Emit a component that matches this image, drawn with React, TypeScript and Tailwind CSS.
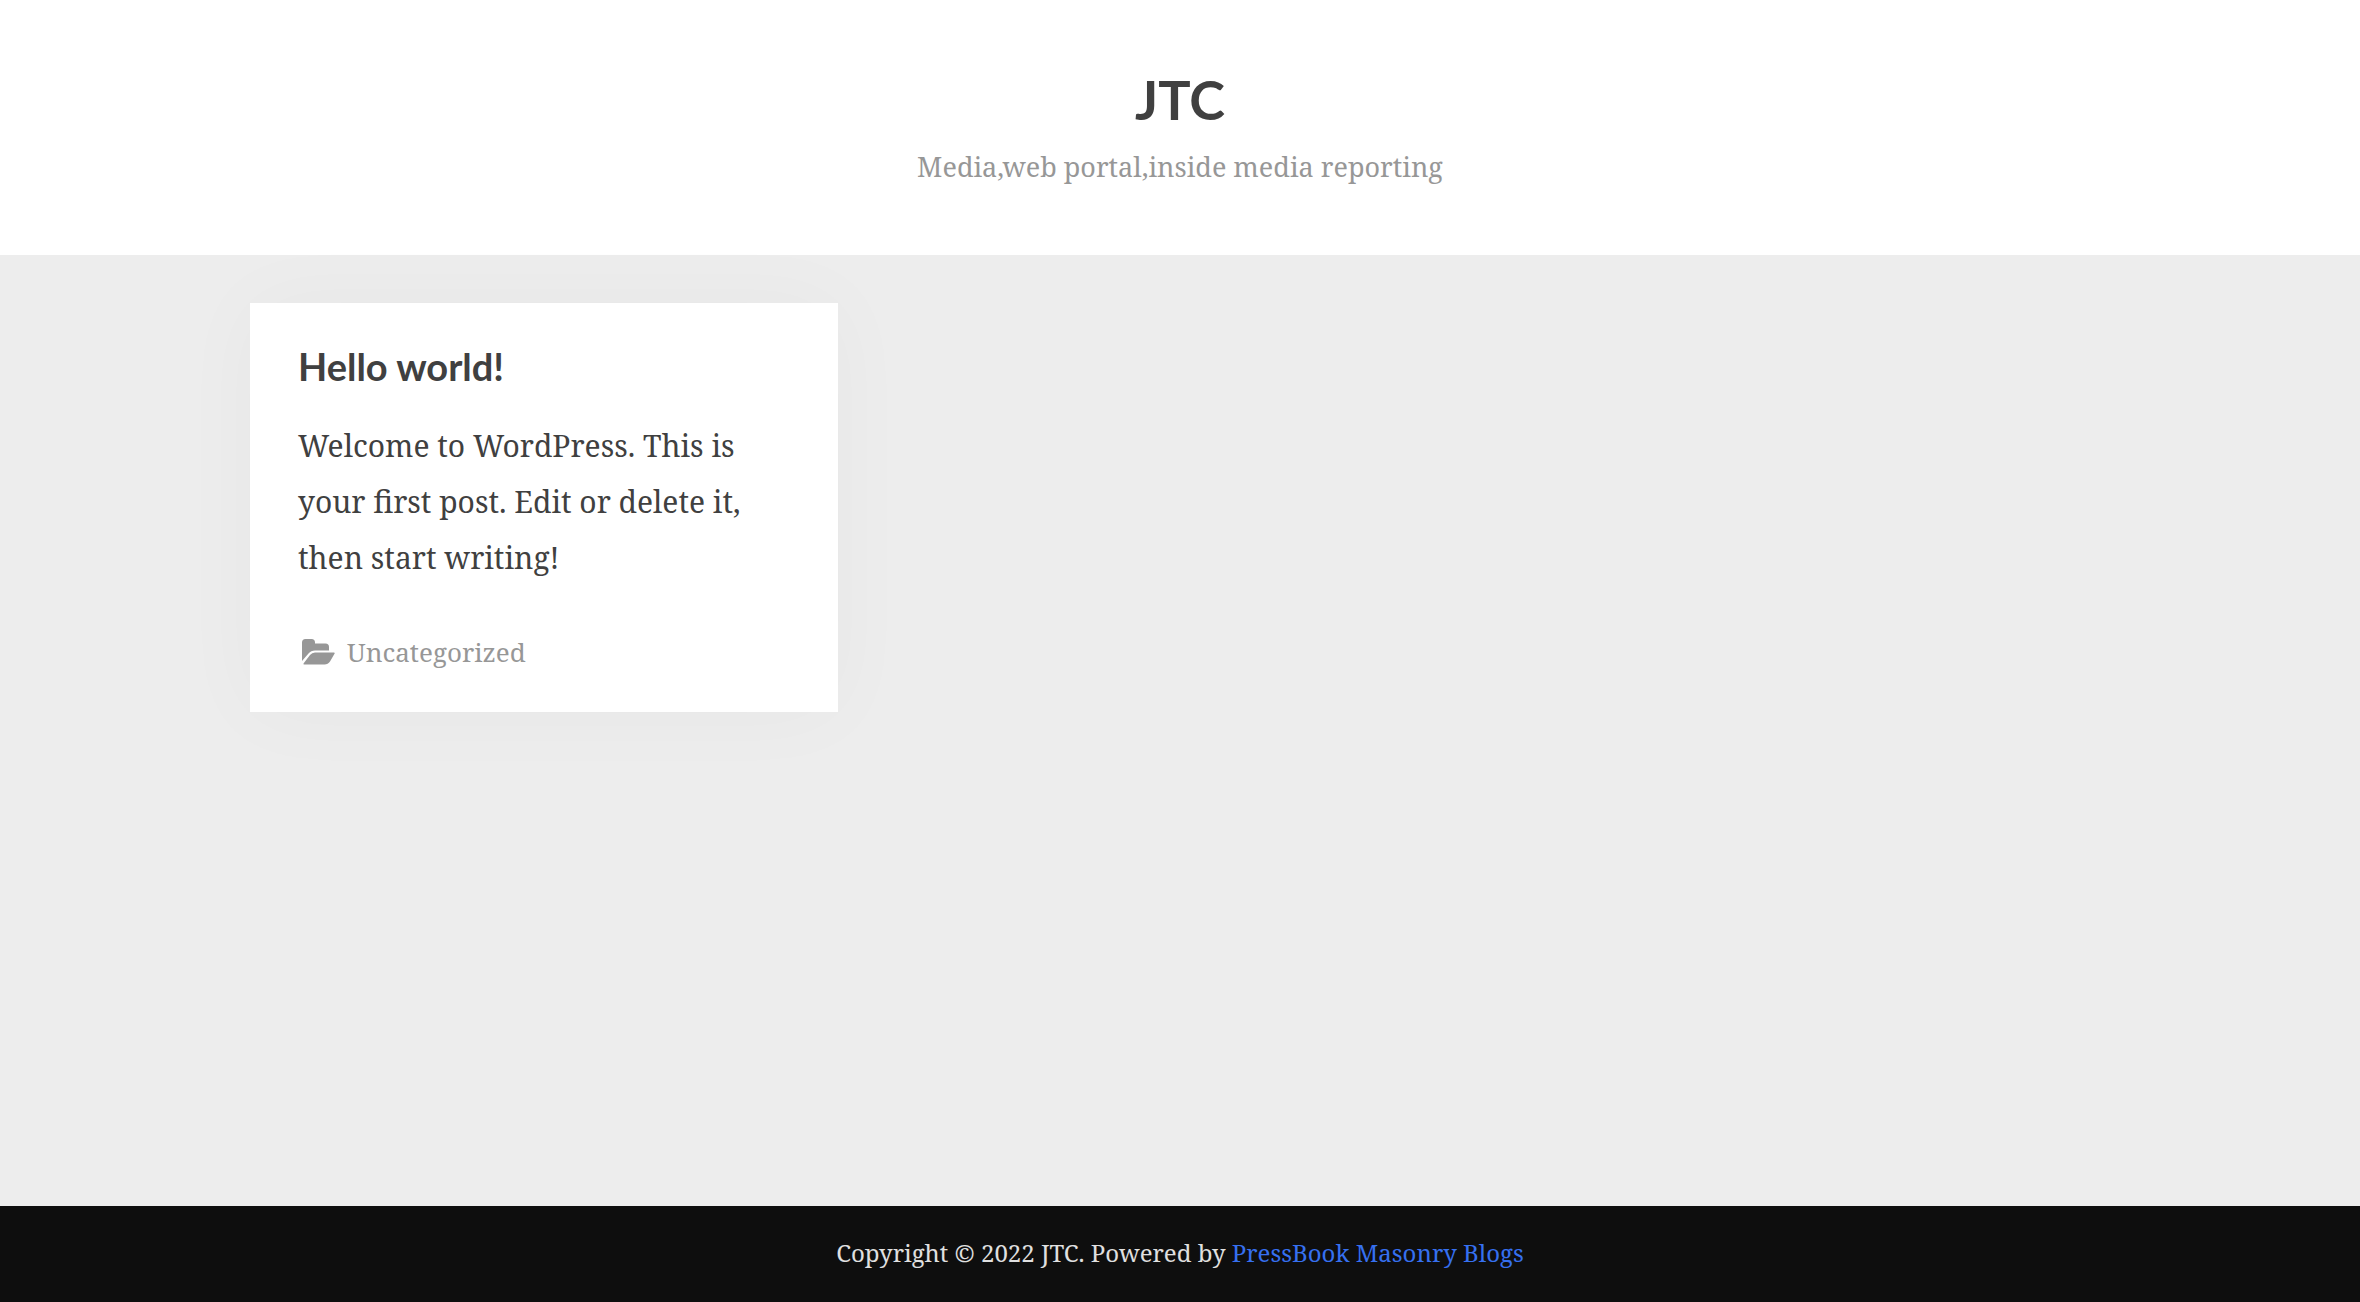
export default function App() {
  return (
    <div className="flex min-h-screen flex-col bg-[#ededed] font-['Noto_Serif','Liberation_Serif',serif] text-[#404040]">
      <header className="flex flex-col items-center bg-white pt-[66px] pb-[63px] text-center">
        <h1 className="font-['Lato',sans-serif] text-[54px] leading-[68px] font-bold">
          <a href="#home">JTC</a>
        </h1>
        <p className="mt-2 text-[27px] leading-[50px] text-[#979797]">Media,web portal,inside media reporting</p>
      </header>
      <main className="mx-auto w-full max-w-[1860px] flex-1 px-6 py-12 min-[1860px]:px-0">
        <div className="grid grid-cols-1 gap-12 md:grid-cols-2 xl:grid-cols-3">
          <article className="bg-white px-12 pt-[39px] pb-[34px] shadow-[0_0_80px_rgba(0,0,0,0.03)]">
            <h2 className="font-['Lato',sans-serif] text-[38px] leading-[48px] font-bold">
              <a href="#post">Hello world!</a>
            </h2>
            <p className="mt-7 text-[30px] leading-[56px]">
              Welcome to WordPress. This is your first post. Edit or delete it, then start writing!
            </p>
            <a href="#uncategorized" className="mt-10 flex items-center gap-3 pl-1 text-[26px] leading-[52px] text-[#979797]">
              <svg viewBox="0 0 33 26" className="h-[26px] w-[33px]" fill="currentColor" aria-hidden="true">
                <path d="M0 22V3.500Q0 0 3.500 0H9.500Q13 0 13 3.500V4.500H23.500Q27 4.500 27 8V11.500H13Q9 11.500 6.500 14.500Z" />
                <path d="M13 13.500H32Q33.200 13.500 32.500 14.700L28 22.500Q26 25.500 22.500 25.500H2.500Q1 25.500 1.700 24.300L8 16Q10 13.500 13 13.500Z" />
              </svg>
              Uncategorized
            </a>
          </article>
        </div>
      </main>
      <footer className="bg-[#0e0e0e] px-6 pt-[23px] pb-[25px] text-center text-[24px] leading-[48px] text-[#e0e0e0]">
        Copyright © 2022 JTC. Powered by{" "}
        <a href="#theme" className="text-[#3670f0]">PressBook Masonry Blogs</a>
      </footer>
    </div>
  );
}
